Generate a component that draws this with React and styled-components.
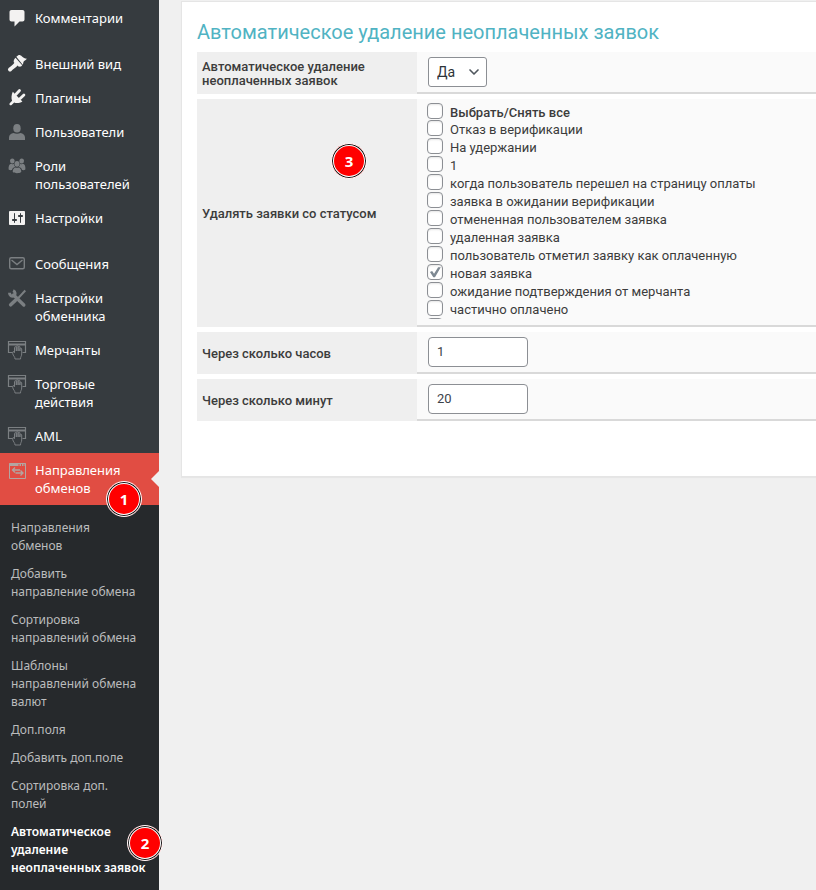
import React, { useState } from "react";
import styled, { createGlobalStyle } from "styled-components";
import { ChevronDown } from "lucide-react";

const icons = {
  comment: (
    <path d="M4.500 2h11c1.200 0 2 .8 2 2v7.500c0 1.200-.8 2-2 2h-3L7.500 18.500v-5h-3c-1.200 0-2-.8-2-2V4c0-1.200.8-2 2-2z" />
  ),
  brush: (
    <>
      <path d="M9.300 2.800l2-1.600c1.500-.4 2.500.2 3.700 1.300 1.300 1.200 2.600 2 4.900 2.300-.9 1.200-2.200 1.800-3.200 2.700-.5.8-.3 2.200-1 3.200z" />
      <path d="M8.500 3.700l6.700 7.500c-1.200 1.700-2.300 1.500-3.700 1.300L6.800 8.200C6.300 6.900 7.200 4.800 8.500 3.700z" />
      <path
        d="M9 10c-1 2-3.500 3-6 5.500"
        fill="none"
        stroke="currentColor"
        strokeWidth="4"
        strokeLinecap="round"
      />
    </>
  ),
  plug: (
    <>
      <path d="M5.800 3.800l9.600 9.600c-2.400 1.600-5.900 2.100-8.200 1.100l-2.600 2.600c-1.300.8-2.800-.6-1.900-1.900l2.400-2.500c-1-2.300-.7-5.900.7-8.900z" />
      <path
        d="M9 6.300L12.500 2.500M13.200 10.500L16.900 7"
        fill="none"
        stroke="currentColor"
        strokeWidth="2.800"
        strokeLinecap="round"
      />
    </>
  ),
  user: (
    <>
      <ellipse cx="10" cy="6.300" rx="3.700" ry="4.300" />
      <path d="M2 18v-2.500c0-2.500 2-4.200 4.500-4.500 2 1 5 1 7 0 2.500.3 4.500 2 4.500 4.500V18z" />
    </>
  ),
  groups: (
    <>
      <ellipse cx="5.300" cy="5" rx="2.300" ry="2.600" />
      <ellipse cx="14.700" cy="5" rx="2.300" ry="2.600" />
      <ellipse cx="10" cy="7.800" rx="2.500" ry="2.900" />
      <path d="M1.600 13.500c-.2-3.200.5-5.500 2.700-5.800 1.300.6 2 .5 2.600.4.200 1.300.7 2.300 1.300 2.900-2 .4-2.900 1.500-3.200 3-1.600.3-2.600.1-3.400-.5zM18.400 13.500c.2-3.200-.5-5.500-2.700-5.800-1.300.6-2 .5-2.600.4-.2 1.300-.7 2.300-1.300 2.900 2 .4 2.900 1.500 3.200 3 1.600.3 2.600.1 3.400-.5z" />
      <path d="M5.700 16c0-2.700 1-4.200 2.800-4.600 1 .5 2 .5 3 0 1.800.4 2.800 1.900 2.800 4.600-2 1.600-6.600 1.600-8.600 0z" />
    </>
  ),
  settings: (
    <path d="M18 16V4c0-1.100-.9-1-1-1H3c-1.100 0-1 .9-1 1v12c0 1.100.9 1 1 1h14c1.100 0 1-.9 1-1zM8 11h1c.55 0 1 .45 1 1s-.45 1-1 1H8v1.500c0 .28-.22.5-.5.5s-.5-.22-.5-.5V13H6c-.55 0-1-.45-1-1s.45-1 1-1h1V5.500c0-.28.22-.5.5-.5s.5.220.5.5V11zm5-2h-1c-.55 0-1-.45-1-1s.45-1 1-1h1V5.500c0-.28.22-.5.5-.5s.5.220.5.5V7h1c.55 0 1 .45 1 1s-.45 1-1 1h-1v5.500c0 .28-.22.5-.5.5s-.5-.22-.5-.5V9z" />
  ),
  mail: (
    <g fill="none" stroke="currentColor" strokeWidth="1.400">
      <rect x="2.700" y="3.700" width="14.600" height="11" rx="1.500" />
      <path d="M4.500 6l5.500 4.500 5.500-4.500" />
    </g>
  ),
  tools: (
    <g fill="none" stroke="currentColor">
      <path
        d="M2.500 4.700c0 2.800 2.300 4.100 4.400 3 1.800-1 1.700-3.900-.8-5"
        strokeWidth="3"
      />
      <path d="M6.500 7l10.300 10" strokeWidth="3.400" strokeLinecap="round" />
      <path d="M18.300 2.500l-7 7.500" strokeWidth="2" />
      <path d="M8.500 12.300L3.700 16.800" strokeWidth="3.600" strokeLinecap="round" />
    </g>
  ),
  merchant: (
    <g fill="none" stroke="currentColor">
      <path d="M5.500 12.500h-4v-11h17v11h-3" strokeWidth="1.200" />
      <path d="M2 4.500h16" strokeWidth="2" />
      <path d="M7.500 12.500V7.500c0-1.100 1.800-1.100 1.800 0V11 6.500c0-1.100 1.800-1.100 1.800 0V11 7c0-1.100 1.800-1.100 1.800 0v4-2c0-1.100 1.800-1.100 1.800 0v5c0 2-1.200 2.500-1.200 5H8c0-2.500-1.800-3-2.300-5.500-.3-1.300.2-2 .8-2l1 1.500" />
    </g>
  ),
  exchange: (
    <g fill="none" stroke="currentColor">
      <path d="M2.500 3.500h16v15h-16z" />
      <path d="M2.500 4.500h16" strokeWidth="3" strokeDasharray="9 1 1.500 1 1.500 1 1" />
      <path
        d="M13 10H5.500M8 7.500L5.500 10 8 12.500M8.500 13H16M13.500 10.500L16 13l-2.500 2.500"
        strokeWidth="1.300"
      />
    </g>
  ),
};

const menuGroups = [
  [{ icon: "comment", text: "Комментарии", bright: true }],
  [
    { icon: "brush", text: "Внешний вид", bright: true },
    { icon: "plug", text: "Плагины", bright: true },
    { icon: "user", text: "Пользователи" },
    { icon: "groups", text: "Роли пользователей" },
    { icon: "settings", text: "Настройки", bright: true },
  ],
  [
    { icon: "mail", text: "Сообщения" },
    { icon: "tools", text: "Настройки обменника" },
    { icon: "merchant", text: "Мерчанты" },
    { icon: "merchant", text: "Торговые действия" },
    { icon: "merchant", text: "AML" },
    { icon: "exchange", text: "Направления обменов", active: true, step: 1 },
  ],
];

const submenu = [
  "Направления обменов",
  "Добавить направление обмена",
  "Сортировка направлений обмена",
  "Шаблоны направлений обмена валют",
  "Доп.поля",
  "Добавить доп.поле",
  "Сортировка доп. полей",
];

const statuses = [
  "Отказ в верификации",
  "На удержании",
  "1",
  "когда пользователь перешел на страницу оплаты",
  "заявка в ожидании верификации",
  "отмененная пользователем заявка",
  "удаленная заявка",
  "пользователь отметил заявку как оплаченную",
  "новая заявка",
  "ожидание подтверждения от мерчанта",
  "частично оплачено",
  "",
];

const MenuIcon = ({ name, bright, active }) => (
  <Icon
    viewBox="0 0 20 20"
    $bright={bright}
    $active={active}
    aria-hidden="true"
  >
    {icons[name]}
  </Icon>
);

const StatusList = () => {
  const [checked, setChecked] = useState([8]);

  const toggle = (index) =>
    setChecked((prev) =>
      prev.includes(index) ? prev.filter((i) => i !== index) : [...prev, index]
    );
  const allChecked = checked.length === statuses.length;
  const toggleAll = () =>
    setChecked(allChecked ? [] : statuses.map((_, index) => index));

  return (
    <Statuses>
      <StatusLabel $all>
        <Checkbox type="checkbox" checked={allChecked} onChange={toggleAll} />
        Выбрать/Снять все
      </StatusLabel>
      {statuses.map((status, index) => (
        <StatusLabel key={index}>
          <Checkbox
            type="checkbox"
            checked={checked.includes(index)}
            onChange={() => toggle(index)}
          />
          {status}
        </StatusLabel>
      ))}
    </Statuses>
  );
};

const App = () => {
  return (
    <Page>
      <GlobalStyle />
      <Sidebar>
        {menuGroups.map((group, index) => (
          <MenuGroup key={index}>
            {group.map((item) => (
              <li key={item.text}>
                <MenuLink href="#" $active={item.active}>
                  <MenuIcon
                    name={item.icon}
                    bright={item.bright}
                    active={item.active}
                  />
                  {item.text}
                  {item.step && (
                    <Step $right={17} $bottom={-12}>
                      {item.step}
                    </Step>
                  )}
                </MenuLink>
              </li>
            ))}
          </MenuGroup>
        ))}
        <Submenu>
          {submenu.map((text) => (
            <li key={text}>
              <SubmenuLink href="#">{text}</SubmenuLink>
            </li>
          ))}
          <li>
            <SubmenuLink href="#" $current>
              Автоматическое удаление неоплаченных заявок
              <Step $right={-4} $bottom={21}>
                2
              </Step>
            </SubmenuLink>
          </li>
        </Submenu>
      </Sidebar>

      <Content>
        <Card>
          <Title>Автоматическое удаление неоплаченных заявок</Title>
          <Form>
            <Row>
              <RowLabel as="label" htmlFor="auto">
                Автоматическое удаление неоплаченных заявок
              </RowLabel>
              <RowField>
                <SelectWrap>
                  <Select id="auto" defaultValue="yes">
                    <option value="yes">Да</option>
                  </Select>
                  <ChevronDown size={16} strokeWidth={2.5} />
                </SelectWrap>
              </RowField>
            </Row>
            <Row>
              <RowLabel>
                Удалять заявки со статусом
                <Step $right={50} $bottom={148}>
                  3
                </Step>
              </RowLabel>
              <RowField>
                <StatusList />
              </RowField>
            </Row>
            <Row>
              <RowLabel as="label" htmlFor="hours">
                Через сколько часов
              </RowLabel>
              <RowField>
                <Input id="hours" type="text" defaultValue="1" />
              </RowField>
            </Row>
            <Row>
              <RowLabel as="label" htmlFor="minutes">
                Через сколько минут
              </RowLabel>
              <RowField>
                <Input id="minutes" type="text" defaultValue="20" />
              </RowField>
            </Row>
          </Form>
        </Card>
      </Content>
    </Page>
  );
};

const GlobalStyle = createGlobalStyle`
  * {
    box-sizing: border-box;
  }
  body {
    margin: 0;
    background: #f0f0f0;
    color: #3c3c3c;
    font-family: Roboto, sans-serif;
    font-size: 13px;
  }
  ul {
    list-style: none;
    margin: 0;
    padding: 0;
  }
`;

const Page = styled.div`
  display: flex;
  align-items: stretch;
  min-height: 100vh;
`;

const Sidebar = styled.nav`
  display: flex;
  flex-direction: column;
  flex: 0 0 159px;
  padding-top: 1px;
  background: #363b3f;
  font-family: "Noto Sans", sans-serif;
`;

const MenuGroup = styled.ul`
  & + & {
    margin-top: 12px;
  }
`;

const MenuLink = styled.a`
  position: relative;
  display: block;
  padding: 8px 8px 8px 35px;
  background: ${({ $active }) => ($active ? "#e14d43" : "transparent")};
  color: #fff;
  font-size: 13px;
  line-height: 18px;
  text-decoration: none;

  &::after {
    content: ${({ $active }) => ($active ? '""' : "none")};
    position: absolute;
    top: 50%;
    right: 0;
    margin-top: -8px;
    border: 8px solid transparent;
    border-left: 0;
    border-right-color: #f0f0f0;
  }
`;

const Icon = styled.svg`
  position: absolute;
  top: 7px;
  left: 7px;
  width: 20px;
  height: 20px;
  fill: currentColor;
  color: ${({ $bright, $active }) =>
    $active ? "#b3a5a1" : $bright ? "#f3f2f1" : "#7b7f82"};
`;

const Submenu = styled.ul`
  flex: 1;
  padding: 9px 0 8px;
  background: #26292c;
`;

const SubmenuLink = styled.a`
  position: relative;
  display: block;
  padding: ${({ $current }) => ($current ? "5px 6px 5px 11px" : "5px 16px 5px 11px")};
  color: ${({ $current }) => ($current ? "#fff" : "#bbbcbd")};
  font-size: 12px;
  font-weight: ${({ $current }) => ($current ? 600 : 400)};
  line-height: 18px;
  text-decoration: none;
`;

const Step = styled.span`
  position: absolute;
  right: ${({ $right }) => $right}px;
  bottom: ${({ $bottom }) => $bottom}px;
  z-index: 1;
  display: flex;
  align-items: center;
  justify-content: center;
  width: 36px;
  height: 36px;
  border: 1px solid #fff;
  border-radius: 50%;
  background: #f00;
  box-shadow: inset 0 0 0 1px #111, inset 0 0 0 2px #fff;
  color: #fff;
  font-family: "Noto Sans", sans-serif;
  font-size: 15px;
  font-weight: 700;
`;

const Content = styled.main`
  flex: 1;
  min-width: 0;
  padding: 1px 0 0 22px;
`;

const Card = styled.section`
  padding: 18px 0 55px 15px;
  border: 1px solid #e5e5e5;
  border-right: 0;
  background: #fff;
  box-shadow: 0 1px 1px rgba(0, 0, 0, 0.04);
`;

const Title = styled.h1`
  margin: 0 0 8px;
  color: #50b3c3;
  font-size: 20px;
  font-weight: 400;
  line-height: 24px;
`;

const Form = styled.form`
  display: flex;
  flex-direction: column;
  gap: 5px;
`;

const Row = styled.div`
  display: flex;
`;

const RowLabel = styled.div`
  position: relative;
  display: flex;
  flex: 0 0 220px;
  align-items: center;
  padding: 2px 5px 0;
  background: #efefef;
  font-weight: 500;
  line-height: 14px;
`;

const RowField = styled.div`
  flex: 1;
  min-width: 0;
  padding: 4px 10px;
  border-bottom: 2px solid #d9d9d9;
  background: #fafafa;
`;

const SelectWrap = styled.div`
  position: relative;
  width: 59px;
  margin: 1px;

  svg {
    position: absolute;
    top: 7px;
    right: 5px;
    color: #50575e;
    pointer-events: none;
  }
`;

const Select = styled.select`
  display: block;
  width: 100%;
  height: 30px;
  padding: 0 24px 0 8px;
  appearance: none;
  border: 1px solid #8c8f94;
  border-radius: 3px;
  background: #fff;
  color: #2c3338;
  font-family: inherit;
  font-size: 14px;
`;

const Input = styled.input`
  display: block;
  width: 100px;
  height: 30px;
  margin: 1px;
  padding: 0 8px 2px;
  border: 1px solid #8c8f94;
  border-radius: 4px;
  background: #fff;
  color: #3c434a;
  font-family: inherit;
  font-size: 13px;
`;

const Statuses = styled.div`
  height: 216px;
  margin-bottom: 2px;
  overflow: hidden;
`;

const StatusLabel = styled.label`
  display: flex;
  gap: 7px;
  height: ${({ $all }) => ($all ? 17 : 18)}px;
  font-weight: ${({ $all }) => ($all ? 500 : 400)};
  line-height: 20px;
`;

const Checkbox = styled.input`
  display: grid;
  place-items: center;
  flex: none;
  width: 16px;
  height: 16px;
  margin: 0;
  appearance: none;
  border: 1px solid #8c8f94;
  border-radius: 4px;
  background: #fff;
  box-shadow: inset 0 1px 2px rgba(0, 0, 0, 0.1);

  &:checked::before {
    content: "";
    width: 12px;
    height: 12px;
    background: #7e8993;
    clip-path: polygon(8% 50%, 26% 42%, 42% 64%, 76% 10%, 98% 10%, 50% 94%, 36% 94%);
  }
`;

export default App;
